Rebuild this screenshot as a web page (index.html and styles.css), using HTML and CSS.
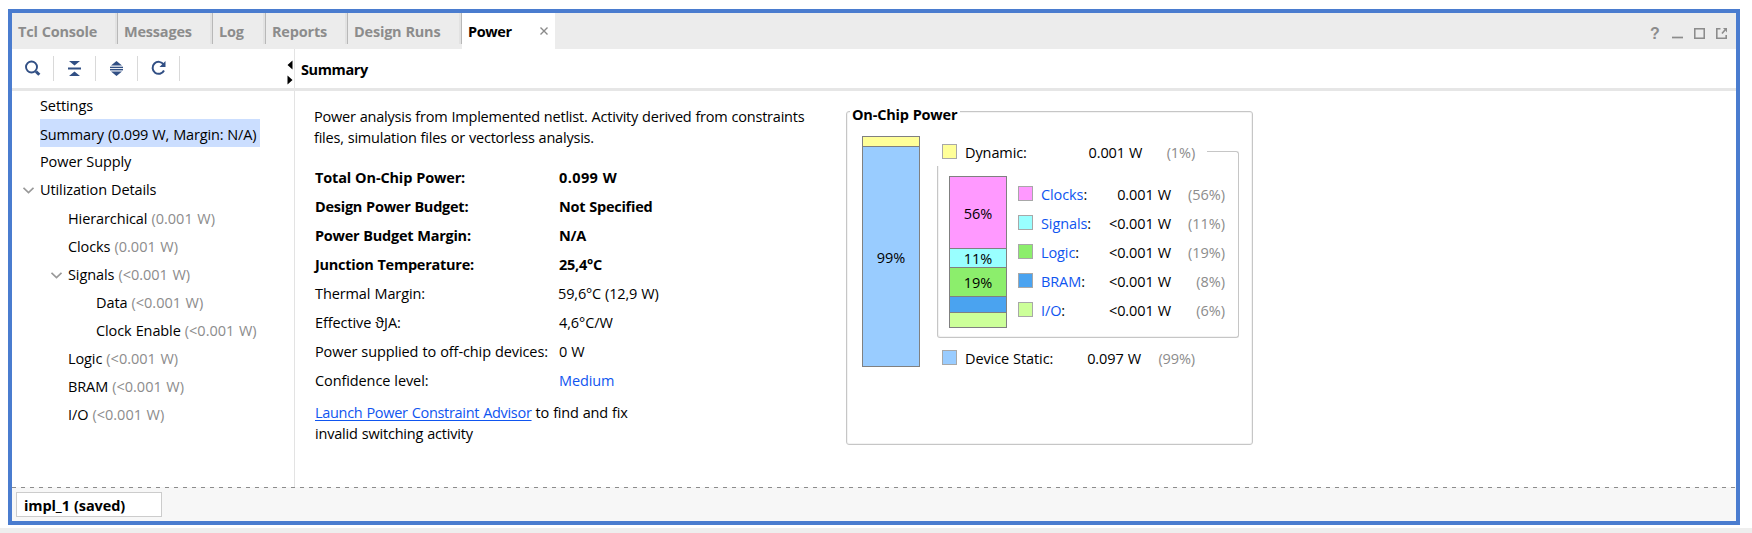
FILE: index.html
```html
<!DOCTYPE html>
<html lang="en">
<head>
<meta charset="utf-8">
<title>Power</title>
<link rel="stylesheet" href="styles.css">
</head>
<body>
<div class="window">
  <div class="tabs">
    <div class="tab t1">Tcl Console</div>
    <div class="tab t2">Messages</div>
    <div class="tab t3">Log</div>
    <div class="tab t4">Reports</div>
    <div class="tab t5">Design Runs</div>
    <div class="tab active"><span>Power</span><svg width="8" height="8" viewBox="0 0 8 8"><path d="M0.5 0.5L7.5 7.5M7.5 0.5L0.5 7.5" stroke="#8a8a8a" stroke-width="1.4"/></svg></div>
    <div class="win-buttons">
      <span class="help">?</span>
      <svg width="11" height="11" viewBox="0 0 11 11"><path d="M0 9.500H11" stroke="#8c8c8c" stroke-width="1.700"/></svg>
      <svg width="11" height="11" viewBox="0 0 11 11"><rect x="0.75" y="0.75" width="9.5" height="9.5" fill="none" stroke="#8c8c8c" stroke-width="1.6"/></svg>
      <svg width="11" height="11" viewBox="0 0 11 11" fill="none" stroke="#8c8c8c" stroke-width="1.6"><path d="M4.5 0.8H0.8V10.2H10.2V7M6 5.500L9 2"/><path d="M7 0H11V4.5Z" fill="#8c8c8c" stroke="none"/></svg>
    </div>
  </div>
  <div class="main">
    <div class="side">
      <div class="toolbar">
        <div class="tool"><svg width="17" height="17" viewBox="0 0 17 17" fill="none" stroke="#314f84"><circle cx="7.500" cy="7" r="5.500" stroke-width="1.9"/><path d="M12 11.500L15.300 14.800" stroke-width="3"/></svg></div>
        <div class="tool"><svg width="17" height="17" viewBox="0 0 17 17" fill="#314f84"><path d="M3 1H14L8.5 5.500ZM3 16H14L8.5 11.500Z"/><rect x="2" y="7.5" width="13" height="2"/></svg></div>
        <div class="tool"><svg width="17" height="17" viewBox="0 0 17 17" fill="#314f84"><path d="M3 5.500H14L8.5 1ZM3 11.500H14L8.5 16Z"/><rect x="2" y="6.700" width="13" height="1.400"/><rect x="2" y="9" width="13" height="1.400"/></svg></div>
        <div class="tool"><svg width="17" height="17" viewBox="0 0 17 17" fill="none" stroke="#314f84"><path d="M13.600 4.500A6 6 0 1 0 14 10.500" stroke-width="2"/><path d="M15.500 1V7H9.500Z" fill="#314f84" stroke="none"/></svg></div>
        <svg class="split" width="6" height="25" viewBox="0 0 6 25"><path d="M5.500 0.500V9.500L0.500 5ZM0.500 15.500V24.500L5.500 20Z"/></svg>
      </div>
      <div class="tree">
        <div class="row">Settings</div>
        <div class="row sel"><span>Summary (0.099 W, Margin: N/A)</span></div>
        <div class="row">Power Supply</div>
        <div class="row long"><svg class="chev" width="11" height="7" viewBox="0 0 11 7"><path d="M0.500 0.800L5.500 5.600L10.500 0.800"/></svg>Utilization Details</div>
        <div class="row l1">Hierarchical <i>(0.001 W)</i></div>
        <div class="row l1">Clocks <i>(0.001 W)</i></div>
        <div class="row l1"><svg class="chev" width="11" height="7" viewBox="0 0 11 7"><path d="M0.500 0.800L5.500 5.600L10.500 0.800"/></svg>Signals <i>(&lt;0.001 W)</i></div>
        <div class="row l2">Data <i>(&lt;0.001 W)</i></div>
        <div class="row l2">Clock Enable <i>(&lt;0.001 W)</i></div>
        <div class="row l1">Logic <i>(&lt;0.001 W)</i></div>
        <div class="row l1">BRAM <i>(&lt;0.001 W)</i></div>
        <div class="row l1">I/O <i>(&lt;0.001 W)</i></div>
      </div>
    </div>
    <div class="content">
      <div class="title">Summary</div>
      <div class="columns">
        <div class="report">
          <p class="intro">Power analysis from Implemented netlist. Activity derived from constraints<br>files, simulation files or vectorless analysis.</p>
          <div class="facts">
            <b class="lead">Total On-Chip Power:</b><b class="lead-value">0.099 W</b>
            <b>Design Power Budget:</b><b>Not Specified</b>
            <b>Power Budget Margin:</b><b>N/A</b>
            <b>Junction Temperature:</b><b>25,4°C</b>
            <span>Thermal Margin:</span><span class="tight">59,6°C (12,9 W)</span>
            <span>Effective ϑJA:</span><span>4,6°C/W</span>
            <span>Power supplied to off-chip devices:</span><span>0 W</span>
            <span>Confidence level:</span><span class="blue">Medium</span>
          </div>
          <p class="advice"><a class="blue">Launch Power Constraint Advisor</a> to find and fix<br>invalid switching activity</p>
        </div>
        <div class="group">
          <div class="legend">On-Chip Power</div>
          <div class="bar total"><div class="yellow"></div><div class="sky">99%</div></div>
          <div class="breakdown">
            <div class="line dynamic"><i class="sw yellow"></i><span class="name">Dynamic:</span><span class="val">0.001 W</span><span class="pct">(1%)</span></div>
            <div class="inner">
              <div class="bar parts"><div class="pink">56%</div><div class="cyan">11%</div><div class="green">19%</div><div class="azure"></div><div class="lime"></div></div>
              <div class="items">
                <div class="line"><i class="sw pink"></i><span class="name"><a>Clocks</a>:</span><span class="val">0.001 W</span><span class="pct">(56%)</span></div>
                <div class="line"><i class="sw cyan"></i><span class="name"><a>Signals</a>:</span><span class="val">&lt;0.001 W</span><span class="pct">(11%)</span></div>
                <div class="line"><i class="sw green"></i><span class="name"><a>Logic</a>:</span><span class="val">&lt;0.001 W</span><span class="pct">(19%)</span></div>
                <div class="line"><i class="sw azure"></i><span class="name"><a>BRAM</a>:</span><span class="val">&lt;0.001 W</span><span class="pct">(8%)</span></div>
                <div class="line"><i class="sw lime"></i><span class="name"><a>I/O</a>:</span><span class="val">&lt;0.001 W</span><span class="pct">(6%)</span></div>
              </div>
            </div>
            <div class="line static"><i class="sw sky"></i><span class="name">Device Static:</span><span class="val">0.097 W</span><span class="pct">(99%)</span></div>
          </div>
        </div>
      </div>
    </div>
  </div>
  <div class="status"><div class="run">impl_1 (saved)</div></div>
</div>
<div class="below"></div>
</body>
</html>
```
FILE: styles.css
```css
* { box-sizing: border-box; }
body { margin: 0; height: 533px; overflow: hidden; background: #fff; color: #000; padding-top: 9px;
  font-family: "Open Sans", "Noto Sans", sans-serif; font-size: 14.5px; letter-spacing: -0.1px; word-spacing: 0.4px; white-space: nowrap; }
i { font-style: normal; }
p { margin: 0; }
svg { display: block; flex: none; }
.window { margin-left: 8px; width: 1732px; height: 516px; border: 4px solid #4a7ccf; display: flex; flex-direction: column; }
.below { margin-top: 3px; height: 5px; background: #eee; }

.tabs { height: 36px; flex: none; display: flex; align-items: flex-start; background: #ececec; color: #8c8c8c; font-weight: 700; letter-spacing: -0.2px; }
.tab { height: 31px; line-height: 37px; padding-left: 6px; border-right: 1px solid #b8b8b8; box-shadow: inset -2px 0 #e2e2e2; }
.t1 { width: 106px; }
.t2 { width: 95px; }
.t3 { width: 53px; }
.t4 { width: 82px; }
.t5 { width: 114px; }
.tab.active { width: 93px; height: 36px; background: #fff; color: #000; border: 0; box-shadow: none; display: flex; justify-content: space-between; align-items: center; padding-right: 7px; letter-spacing: -0.4px; }
.win-buttons { margin-left: auto; height: 36px; display: flex; align-items: center; gap: 11px; padding: 5px 9px 0 0; }
.help { font-family: "Liberation Sans", sans-serif; font-size: 16px; width: 11px; line-height: 14px; }

.main { flex: 1; display: flex; min-height: 0; }
.side { width: 283px; border-right: 1px solid #e3e3e3; }
.toolbar { height: 42px; border-bottom: 3px solid #e6e6e6; display: flex; margin-right: -1px; }
.tool { width: 42px; height: 25px; margin-top: 7px; border-right: 1px solid #d9d9d9; display: flex; align-items: center; justify-content: center; }
.split { margin: 11px 2px 0 auto; }

.row { height: 28px; line-height: 30px; padding-left: 28px; display: flex; white-space: pre; }
.row.long { height: 29px; }
.row i { color: #8c8c8c; letter-spacing: 0; word-spacing: 0.8px; }
.row.sel span { background: #cbdeff; width: 220px; line-height: 31px; height: 28px; letter-spacing: -0.15px; }
.l1 { padding-left: 56px; }
.l2 { padding-left: 84px; }
.chev { margin: 12px 6px 0 -17px; fill: none; stroke: #999; stroke-width: 1.7; }

.content { flex: 1; }
.title { height: 42px; border-bottom: 3px solid #e6e6e6; padding-left: 6px; line-height: 41px; font-weight: 700; letter-spacing: -0.4px; }
.columns { display: flex; padding-left: 19px; }
.report { width: 532px; padding-top: 15px; }
.intro { line-height: 21px; letter-spacing: -0.21px; }
.facts { margin: 15px 0 0 1px; display: grid; grid-template-columns: 244px auto; line-height: 29px; }
.facts b { letter-spacing: -0.25px; }
.facts .lead { letter-spacing: -0.15px; }
.facts .lead-value { letter-spacing: 0.4px; }
.facts .tight { margin-left: -1px; letter-spacing: -0.15px; }
.advice { margin: 7px 0 0 1px; line-height: 21px; letter-spacing: -0.2px; word-spacing: 0.5px; }
.advice a { letter-spacing: -0.3px; }
.blue, .items a { color: #0f55f0; }
.advice a { text-decoration: underline; text-underline-offset: 2px; }

.group { margin-top: 20px; width: 407px; height: 334px; border: 1px solid #c6c6c6; border-radius: 3px; box-shadow: inset 0 0 0 1px #f3f3f3; display: flex; position: relative; padding: 24px 0 0 15px; }
.legend { position: absolute; left: 3px; top: -7px; width: 110px; height: 20px; line-height: 20px; padding-left: 2px; background: #fff; font-weight: 700; letter-spacing: -0.2px; }
.bar { width: 58px; border: 1px solid #808080; display: flex; flex-direction: column; flex: none; text-align: center; }
.bar div { flex: none; }
.bar div + div { border-top: 1px solid #808080; }
.total { height: 231px; }
.total .yellow { height: 9px; }
.total .sky { height: 220px; line-height: 221px; }
.yellow { background: #ff9; }
.sky { background: #9cf; }
.pink { background: #f9f; }
.cyan { background: #9ff; }
.green { background: #8cee6c; }
.azure { background: #4aa3f0; }
.lime { background: #cf9; }
.breakdown { margin-left: 17px; width: 302px; }
.line { display: flex; height: 29px; line-height: 29px; }
.sw { width: 15px; height: 15px; border: 1px solid #a8a8a8; flex: none; }
.val { text-align: right; }
.pct { text-align: right; color: #8c8c8c; }
.dynamic { padding-left: 5px; height: 30px; line-height: 34px; }
.dynamic .sw, .static .sw { margin: 8px 8px 0 0; }
.dynamic .name, .static .name { width: 94px; }
.dynamic .val { width: 84px; }
.dynamic .pct { width: 53px; }
.dynamic::after { content: ""; width: 31px; height: 15px; margin: 15px 0 0 12px; border-top: 1px solid #c6c6c6; border-right: 1px solid #c6c6c6; border-radius: 0 3px 0 0; }
.inner { height: 172px; border: 1px solid #c6c6c6; border-top: 0; border-radius: 0 0 3px 3px; box-shadow: inset 1px -1px #f3f3f3; display: flex; padding: 10px 0 0 11px; }
.parts { height: 152px; }
.parts .pink { height: 71px; line-height: 73px; }
.parts .cyan { height: 19px; line-height: 20px; }
.parts .green { height: 29px; line-height: 29px; }
.parts .azure { height: 16px; }
.parts .lime { flex: 1; }
.items { margin: 4px 0 0 11px; }
.items .sw { margin: 6px 8px 0 0; }
.items .name { width: 50px; }
.items .val { width: 80px; }
.items .pct { width: 54px; letter-spacing: 0; }
.static { padding-left: 5px; margin-top: 4px; line-height: 33px; }
.static .val { width: 82px; }
.static .pct { width: 54px; }

.status { height: 34px; flex: none; background: repeating-linear-gradient(90deg, #8c8c8c 0 4px, #f7f7f7 4px 9px) 0 0 / 100% 1px no-repeat #f7f7f7; padding: 5px 0 0 4px; }
.run { width: 146px; height: 25px; border: 1px solid #ccc; background: #fff; padding-left: 7px; line-height: 26px; font-weight: 700; letter-spacing: -0.1px; }
```
